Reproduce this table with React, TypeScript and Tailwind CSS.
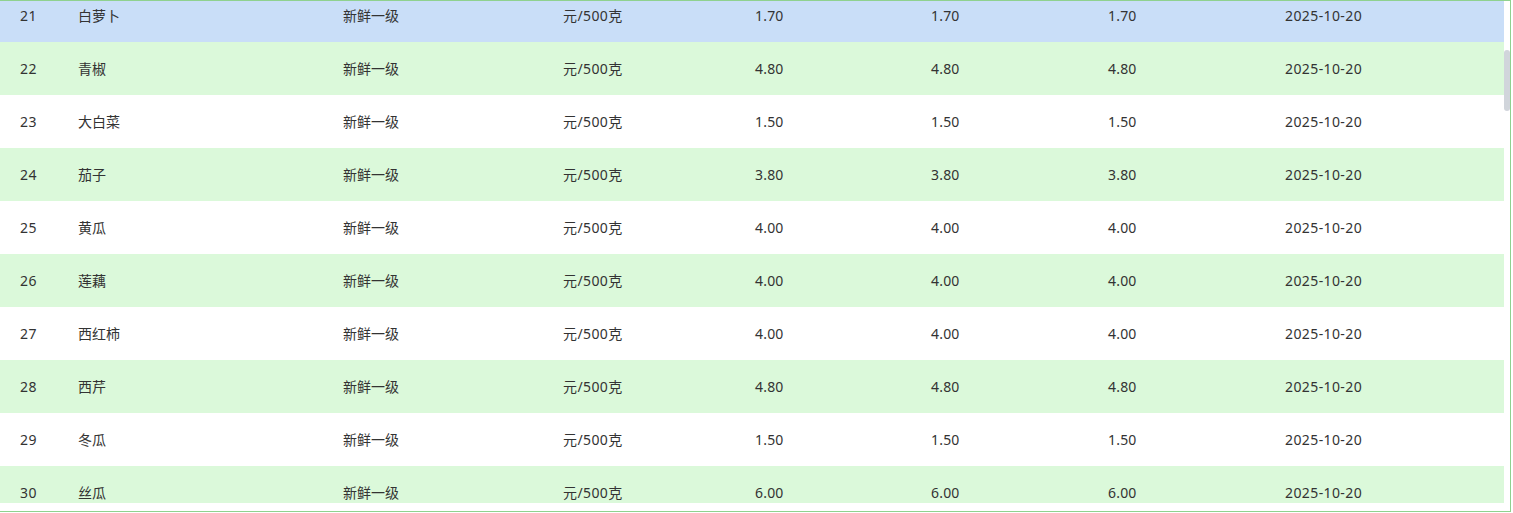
import React from "react";

const rows = [
  ["21", "白萝卜", "1.70"],
  ["22", "青椒", "4.80"],
  ["23", "大白菜", "1.50"],
  ["24", "茄子", "3.80"],
  ["25", "黄瓜", "4.00"],
  ["26", "莲藕", "4.00"],
  ["27", "西红柿", "4.00"],
  ["28", "西芹", "4.80"],
  ["29", "冬瓜", "1.50"],
  ["30", "丝瓜", "6.00"],
];

export default function App() {
  return (
    <div
      className="w-[1511px] h-[512px] border-t border-r border-b border-[#8fd18f] bg-white flex flex-col text-[14px] text-[#333333]"
      style={{ fontFamily: '"Noto Sans", "Noto Sans CJK SC", sans-serif' }}
    >
      <div className="flex h-[502px]">
        <div className="w-[1504px] h-[502px] overflow-hidden">
          <div className="mt-[-12px]">
            {rows.map(([idx, name, price], i) => (
              <div
                key={idx}
                className={
                  "grid grid-cols-[78px_265px_220px_192px_176px_177px_177px_219px] h-[53px] items-center " +
                  (i === 0 ? "bg-[#c9def8]" : i % 2 === 1 ? "bg-[#dbf9da]" : "bg-white")
                }
              >
                <div className="pl-[20px] tracking-[0.4px]">{idx}</div>
                <div>{name}</div>
                <div>新鲜一级</div>
                <div className="tracking-[0.4px]">元/500克</div>
                <div className="tracking-[0.2px]">{price}</div>
                <div className="tracking-[0.2px]">{price}</div>
                <div className="tracking-[0.2px]">{price}</div>
                <div className="tracking-[0.4px]">2025-10-20</div>
              </div>
            ))}
          </div>
        </div>
        <div className="w-[6px] h-[502px]">
          <div className="mt-[49px] h-[61px] w-[6px] rounded-full bg-[#d1d5db]" />
        </div>
      </div>
    </div>
  );
}
